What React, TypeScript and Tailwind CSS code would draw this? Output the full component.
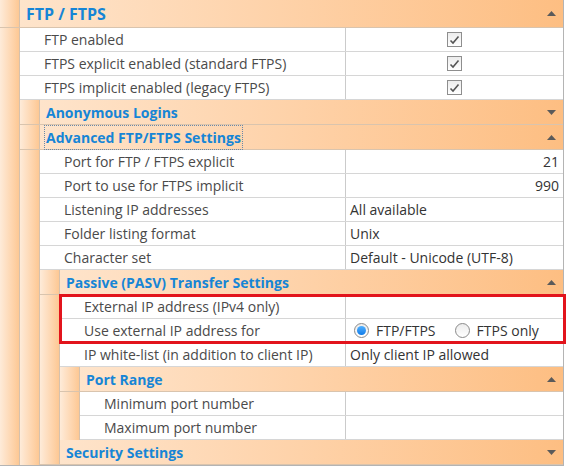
import React from "react";

type Row = {
  label: string;
  value?: React.ReactNode;
  align?: "left" | "right" | "start";
};

type Node =
  | ({ kind: "row" } & Row)
  | { kind: "group"; title: string; open: boolean; focused?: boolean; items?: Node[]; marked?: boolean };

const Arrow = ({ up }: { up: boolean }) => (
  <svg width="9" height="5" viewBox="0 0 9 5" className="shrink-0">
    {up ? <path d="M0 5 L4.5 0 L9 5 Z" fill="#5a5a5a" /> : <path d="M0 0 L9 0 L4.5 5 Z" fill="#5a5a5a" />}
  </svg>
);

const Check = () => (
  <span className="flex h-[15px] w-[15px] items-center justify-center border border-[#8e8e8e] bg-gradient-to-b from-[#ececec] to-white">
    <svg width="11" height="10" viewBox="0 0 11 10">
      <path d="M1.5 5.5 L4 8 L9.5 1.5" fill="none" stroke="#555" strokeWidth="1.6" />
    </svg>
  </span>
);

const Radio = ({ on, label }: { on?: boolean; label: string }) => (
  <span className="flex items-center gap-[7px]">
    <span className="flex h-[15px] w-[15px] items-center justify-center rounded-full border border-[#8a8a8a] bg-gradient-to-b from-[#ececec] to-white">
      {on && <span className="h-[9px] w-[9px] rounded-full bg-gradient-to-b from-[#4fb0ff] to-[#0a7be8]" />}
    </span>
    <span>{label}</span>
  </span>
);

const Indent = () => (
  <div className="w-[20px] shrink-0 border-r border-[#d5c1ad] bg-gradient-to-r from-[#feebd9] to-[#fdc894]" />
);

const tree: Node[] = [
  { kind: "row", label: "FTP enabled", value: <Check /> },
  { kind: "row", label: "FTPS explicit enabled (standard FTPS)", value: <Check /> },
  { kind: "row", label: "FTPS implicit enabled (legacy FTPS)", value: <Check /> },
  { kind: "group", title: "Anonymous Logins", open: false },
  {
    kind: "group",
    title: "Advanced FTP/FTPS Settings",
    open: true,
    focused: true,
    items: [
      { kind: "row", label: "Port for FTP / FTPS explicit", value: "21", align: "right" },
      { kind: "row", label: "Port to use for FTPS implicit", value: "990", align: "right" },
      { kind: "row", label: "Listening IP addresses", value: "All available" },
      { kind: "row", label: "Folder listing format", value: "Unix" },
      { kind: "row", label: "Character set", value: "Default - Unicode (UTF-8)" },
      {
        kind: "group",
        title: "Passive (PASV) Transfer Settings",
        open: true,
        marked: true,
        items: [
          { kind: "row", label: "External IP address (IPv4 only)", value: "" },
          {
            kind: "row",
            label: "Use external IP address for",
            align: "start",
            value: (
              <span className="flex items-center gap-[19px] pl-[4px]">
                <Radio on label="FTP/FTPS" />
                <Radio label="FTPS only" />
              </span>
            ),
          },
          { kind: "row", label: "IP white-list (in addition to client IP)", value: "Only client IP allowed" },
          {
            kind: "group",
            title: "Port Range",
            open: true,
            items: [
              { kind: "row", label: "Minimum port number", value: "" },
              { kind: "row", label: "Maximum port number", value: "" },
            ],
          },
        ],
      },
      { kind: "group", title: "Security Settings", open: false },
    ],
  },
];

const PropRow = ({ label, value, align }: Row) => (
  <div className="flex h-[24px] border-b border-[#d6d6d6] bg-white text-[14px] text-[#4a4a4a]">
    <div className="flex flex-1 items-center truncate pl-[24px]">{label}</div>
    <div
      className={
        "flex w-[218px] shrink-0 items-center border-l border-[#cbcbcb] px-[4px] text-[#333] " +
        (align === "right"
          ? "justify-end"
          : align === "start" || typeof value === "string"
            ? "justify-start"
            : "justify-center")
      }
    >
      {value}
    </div>
  </div>
);

const Header = ({ title, open, focused, tall }: { title: string; open: boolean; focused?: boolean; tall?: boolean }) => (
  <div className={"flex border-b border-[#d9c4ae] " + (tall ? "h-[28px]" : "h-[25px]")}>
    <Indent />
    <div className="flex flex-1 items-center justify-between bg-gradient-to-r from-[#fee4cb] to-[#fdbe82] pl-[4px] pr-[7px]">
      <span
        className={
          "px-[1px] font-bold text-[#1685d6] " +
          (tall ? "text-[16px] " : "text-[14px] ") +
          (focused ? "border border-dotted border-[#6a88a8] py-[1px]" : "border border-transparent")
        }
      >
        {title}
      </span>
      <Arrow up={open} />
    </div>
  </div>
);

const Items = ({ items }: { items: Node[] }) => (
  <div className="flex flex-1 flex-col">
    {items.map((n, i) => (n.kind === "row" ? <PropRow key={i} {...n} /> : <Group key={i} {...n} />))}
  </div>
);

const Group = ({ title, open, focused, items, marked, top }: {
  title: string;
  open: boolean;
  focused?: boolean;
  items?: Node[];
  marked?: boolean;
  top?: boolean;
}) => {
  const rows = items ?? [];
  return (
    <div className="flex flex-col">
      <Header title={title} open={open} focused={focused} tall={top} />
      {open && (
        <div className="flex">
          <Indent />
          {marked ? (
            <div className="flex flex-1 flex-col">
              {/* first two rows of the group carry the red outline */}
              <div className="relative flex flex-col">
                {rows.slice(0, 2).map((r, k) => r.kind === "row" && <PropRow key={k} {...r} />)}
                <div className="pointer-events-none absolute -bottom-[1px] -left-[1px] -right-[3px] -top-[1px] border-[3px] border-[#e2141c]" />
              </div>
              <Items items={rows.slice(2)} />
            </div>
          ) : (
            <Items items={rows} />
          )}
        </div>
      )}
    </div>
  );
};

export default function App() {
  return (
    <div
      className="h-[468px] w-[566px] overflow-hidden bg-white"
      style={{ fontFamily: '"Open Sans", "Noto Sans", "Liberation Sans", sans-serif' }}
    >
      <div className="w-[564px] border-b border-r border-[#b4b4b4]">
        <Group title="FTP / FTPS" open top items={tree} />
      </div>
    </div>
  );
}
